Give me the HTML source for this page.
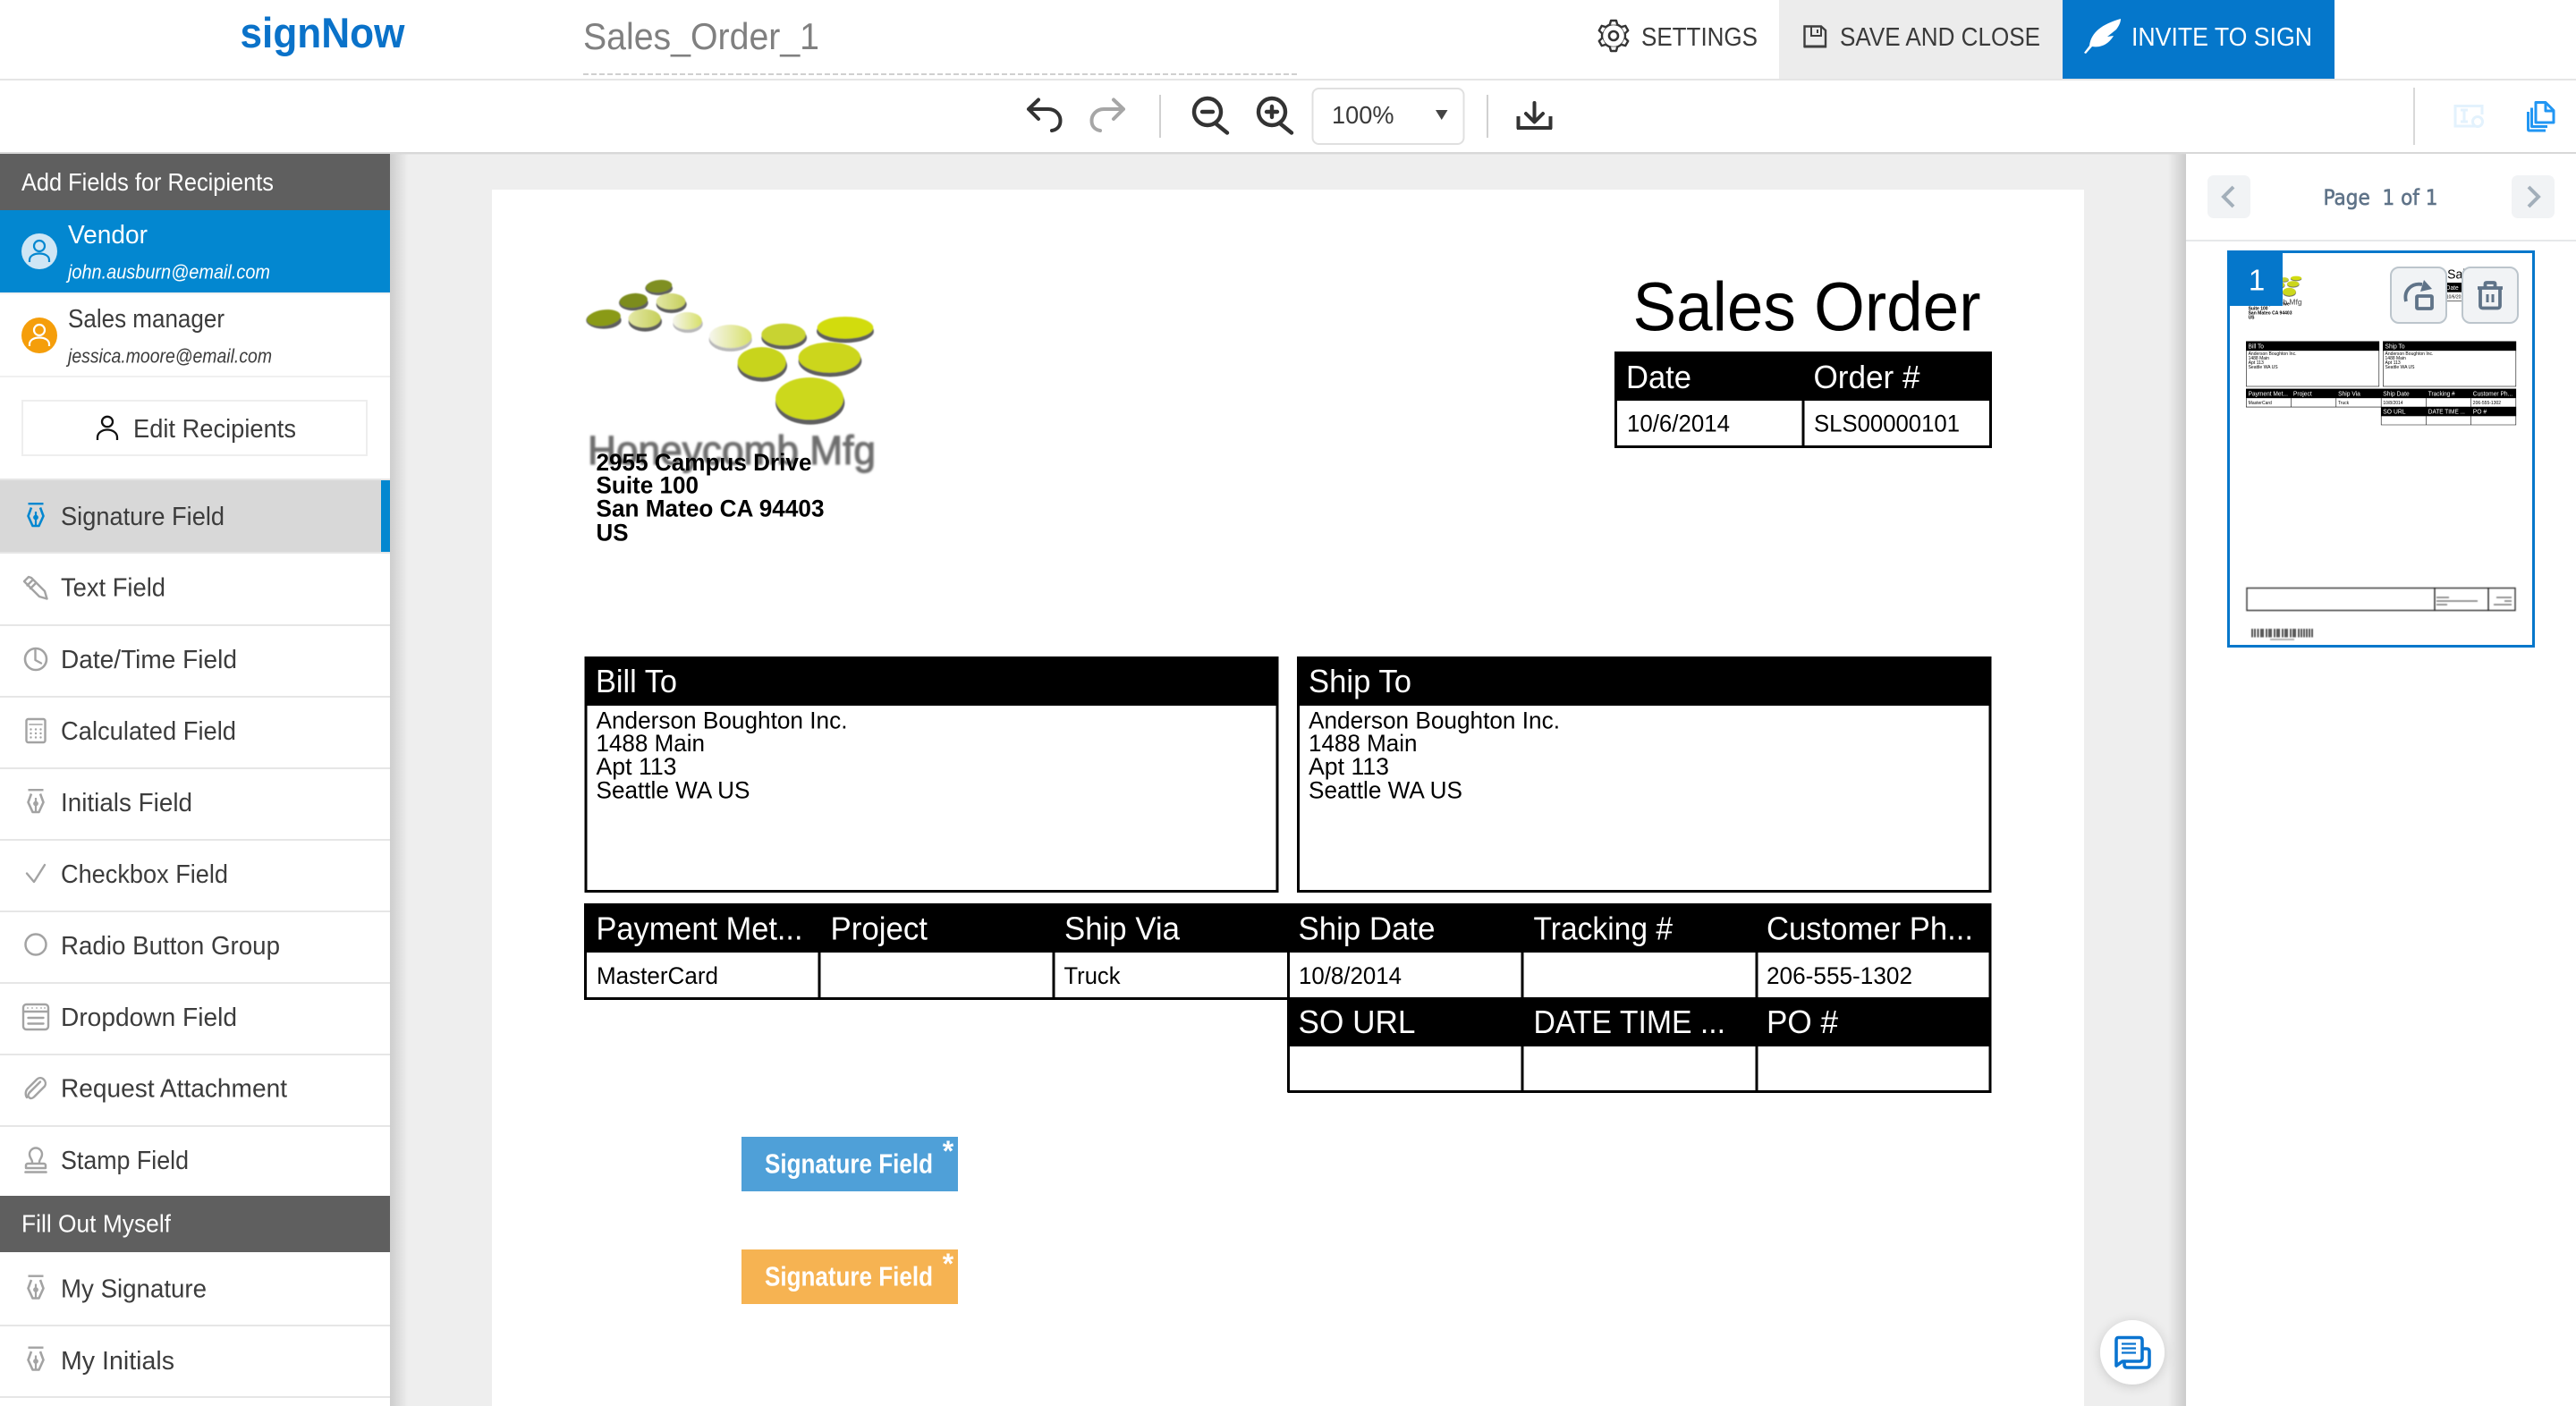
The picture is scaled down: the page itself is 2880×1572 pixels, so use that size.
<!DOCTYPE html>
<html lang="en">
<head>
<meta charset="utf-8">
<title>Sales_Order_1</title>
<style>
html,body{margin:0;padding:0;background:#fff;width:2880px;height:1572px;overflow:hidden}
svg{display:block}
text{font-family:"Liberation Sans",Arial,sans-serif;white-space:pre}
.s text{fill:#3c3c3c;font-size:29px}
.d text{fill:#000;font-size:26.500px}
.d .h{fill:#fff;font-size:36px}
.ic{fill:none;stroke:#a3a3a3;stroke-width:2.4;stroke-linecap:round;stroke-linejoin:round}
.tb{fill:none;stroke:#333;stroke-width:4;stroke-linecap:round;stroke-linejoin:round}
</style>
</head>
<body>
<svg xmlns="http://www.w3.org/2000/svg" width="2880" height="1572" viewBox="0 0 2880 1572">
<defs>
<linearGradient id="shL" x1="0" x2="1" y1="0" y2="0"><stop offset="0" stop-color="#cdcdcd"/><stop offset="1" stop-color="#eeeeee"/></linearGradient>
<linearGradient id="shR" x1="0" x2="1" y1="0" y2="0"><stop offset="0" stop-color="#eeeeee"/><stop offset="1" stop-color="#cbcbcb"/></linearGradient>
<linearGradient id="fade1" x1="0" x2="1" y1="0" y2="0"><stop offset="0" stop-color="#f6f6ee"/><stop offset="1" stop-color="#d8e06a"/></linearGradient>
<linearGradient id="fade2" x1="0" x2="1" y1="0" y2="0"><stop offset="0" stop-color="#e4e8a8"/><stop offset="1" stop-color="#c6cf5a"/></linearGradient>
<filter id="lb"><feGaussianBlur stdDeviation="1.6"/></filter>
<filter id="hb"><feGaussianBlur stdDeviation="1.1"/></filter>
<filter id="tb"><feGaussianBlur stdDeviation="0.55"/></filter>
<filter id="cs" x="-30%" y="-30%" width="160%" height="160%"><feDropShadow dx="0" dy="2" stdDeviation="6" flood-color="#000" flood-opacity=".16"/></filter>
<g id="nib">
<rect x="-8.500" y="0" width="17" height="2.400" fill="currentColor"/>
<path d="M-5 5.500L-8.500 15L-3.500 26H3.500L8.500 15L5 5.500" fill="none" stroke="currentColor" stroke-width="2.600" stroke-linejoin="round"/>
<path d="M0 10V26" stroke="currentColor" stroke-width="2.200"/>
<circle cx="0" cy="16.500" r="2.900" fill="currentColor"/>
</g>
<path id="tooth" d="M-4.200 -12.400L-3 -17H3L4.200 -12.400" fill="#fff" stroke="#333" stroke-width="2.400" stroke-linejoin="round"/>
</defs>

<!-- page background -->
<rect width="2880" height="1572" fill="#fff"/>
<rect x="436" y="172" width="2008" height="1400" fill="#eeeeee"/>
<rect x="436" y="172" width="20" height="1400" fill="url(#shL)"/>
<rect x="2424" y="172" width="20" height="1400" fill="url(#shR)"/>

<!-- header -->
<text x="268.500" y="53" font-size="47" font-weight="700" fill="#0a72c9" textLength="184" lengthAdjust="spacingAndGlyphs">signNow</text>
<text x="652" y="55" font-size="42" fill="#808080" textLength="264" lengthAdjust="spacingAndGlyphs">Sales_Order_1</text>
<path d="M652 83H1452" stroke="#cfcfcf" stroke-width="2" stroke-dasharray="6 3"/>
<rect x="1989" y="0" width="317" height="88" fill="#ececec"/>
<rect x="2306" y="0" width="304" height="88" fill="#0577cb"/>
<rect y="88" width="2880" height="2" fill="#e5e5e5"/>

<g transform="translate(1804,40)">
<circle r="13" fill="#fff" stroke="#333" stroke-width="2.400"/>
<use href="#tooth"/><use href="#tooth" transform="rotate(60)"/><use href="#tooth" transform="rotate(120)"/><use href="#tooth" transform="rotate(180)"/><use href="#tooth" transform="rotate(240)"/><use href="#tooth" transform="rotate(300)"/>
<circle r="5" fill="none" stroke="#333" stroke-width="2.600"/>
</g>
<text x="1835" y="51" font-size="29" fill="#3a3a3a" textLength="130" lengthAdjust="spacingAndGlyphs">SETTINGS</text>

<path d="M2017.500 29.500H2036L2041 34V52H2017.500Z" fill="none" stroke="#3f3f3f" stroke-width="2.400"/>
<path d="M2017 52H2042" stroke="#3f3f3f" stroke-width="3"/>
<path d="M2025 30V40H2036V30M2032 33V37" fill="none" stroke="#3f3f3f" stroke-width="2"/>
<text x="2057" y="51" font-size="29" fill="#3a3a3a" textLength="224" lengthAdjust="spacingAndGlyphs">SAVE AND CLOSE</text>

<path d="M2371 21C2350 27 2338 36 2336 51L2330 59L2332 60L2339 52C2351 54 2359 47 2363 40L2356 41L2366 33C2369 29 2371 25 2371 21Z" fill="#fff"/>
<text x="2383" y="51" font-size="29" fill="#fff" textLength="202" lengthAdjust="spacingAndGlyphs">INVITE TO SIGN</text>

<!-- toolbar -->
<rect y="170" width="2880" height="2.400" fill="#d8d8d8"/>
<path class="tb" d="M1161 111.500L1150 122L1161 133M1150 122H1172C1180 122 1185.500 128 1185.500 135C1185.500 141 1182 145 1176 146"/>
<path class="tb" style="stroke:#a6a6a6" d="M1245 111.500L1256 122L1245 133M1256 122H1234C1226 122 1220.500 128 1220.500 135C1220.500 141 1224 145 1230 146"/>
<rect x="1296" y="106" width="2" height="48" fill="#d0d0d0"/>
<g class="tb" style="stroke-width:4.400">
<circle cx="1350" cy="125" r="15"/>
<path d="M1359 138L1372 148.500M1344 125H1356"/>
<circle cx="1422" cy="125" r="15"/>
<path d="M1431 138L1444 148.500M1416 125H1428M1422 119V131"/>
</g>
<rect x="1467.500" y="99" width="169" height="62" rx="7" fill="#fff" stroke="#e0e0e0" stroke-width="2"/>
<text x="1489" y="138" font-size="28" fill="#3a3a3a" textLength="69.500" lengthAdjust="spacingAndGlyphs">100%</text>
<path d="M1605 123H1618.500L1611.750 134Z" fill="#444"/>
<rect x="1662" y="106" width="2" height="48" fill="#d0d0d0"/>
<path class="tb" d="M1715.500 115V136M1706 127L1715.500 136.500L1725 127"/>
<path class="tb" style="stroke-linecap:butt" d="M1697.500 130V143H1733.500V130"/>
<rect x="1696" y="141" width="39" height="4" fill="#333"/>
<rect x="2698" y="98" width="2" height="64" fill="#d8d8d8"/>
<g fill="none" stroke="#e3f2fd" stroke-width="3">
<path d="M2768 141H2745V118.500H2775V128"/>
<path d="M2755 123V136M2751 123H2759M2751 136H2759"/>
<circle cx="2770" cy="136" r="5.500"/>
</g>
<g fill="none" stroke="#2196f3" stroke-width="3" stroke-linejoin="round">
<path d="M2835 114.500H2846L2855 123.500V137H2835Z"/>
<path d="M2846 115V124H2855"/>
<path d="M2830.500 120.500V141.500H2848"/>
<path d="M2826.500 125V144.500C2826.500 145.500 2827 146 2828 146H2846"/>
</g>

<!-- left sidebar -->
<rect x="0" y="172" width="436" height="1400" fill="#fff"/>
<rect x="0" y="172" width="436" height="63" fill="#5f5f5f"/>
<text x="24" y="213" font-size="27.500" fill="#fff" textLength="282" lengthAdjust="spacingAndGlyphs">Add Fields for Recipients</text>
<rect x="0" y="235" width="436" height="92" fill="#0387d0"/>
<rect x="0" y="327" width="436" height="2" fill="#f2f2f2"/>
<circle cx="44" cy="281" r="20" fill="#cfe6f5"/>
<g fill="none" stroke="#0387d0" stroke-width="2.200">
<ellipse cx="44" cy="275" rx="6" ry="6"/>
<path d="M33 293V291C33 286 38 283.500 44 283.500C50 283.500 55 286 55 291V293"/>
</g>
<text x="76" y="272" font-size="29" fill="#fff" textLength="89" lengthAdjust="spacingAndGlyphs">Vendor</text>
<text x="76" y="311.500" font-size="22" font-style="italic" fill="#fff" textLength="226" lengthAdjust="spacingAndGlyphs">john.ausburn@email.com</text>
<rect x="0" y="420" width="436" height="2" fill="#f0f0f0"/>
<circle cx="44" cy="375" r="20" fill="#f59e0b"/>
<g fill="none" stroke="#fff" stroke-width="2.200">
<ellipse cx="44" cy="369" rx="6" ry="6"/>
<path d="M33 387V385C33 380 38 377.500 44 377.500C50 377.500 55 380 55 385V387"/>
</g>
<g class="s">
<text x="76" y="366" textLength="175" lengthAdjust="spacingAndGlyphs">Sales manager</text>
<text x="76" y="405.500" style="font-size:22px;font-style:italic" textLength="228" lengthAdjust="spacingAndGlyphs">jessica.moore@email.com</text>
</g>
<rect x="25" y="448" width="385" height="61" fill="#fff" stroke="#eeeeee" stroke-width="2"/>
<g fill="none" stroke="#111" stroke-width="2.300">
<ellipse cx="120" cy="471.500" rx="6" ry="5.700"/>
<path d="M109 492V489C109 484 114 480.500 120 480.500C126 480.500 131 484 131 489V492"/>
</g>
<g class="s"><text x="149" y="489" textLength="182" lengthAdjust="spacingAndGlyphs">Edit Recipients</text></g>

<rect x="0" y="535" width="436" height="2" fill="#e6e6e6"/>
<rect x="0" y="537" width="436" height="80" fill="#d8d8d8"/>
<rect x="426" y="537" width="10" height="80" fill="#0387d0"/>
<g fill="#e6e6e6">
<rect y="617" width="436" height="2"/><rect y="698" width="436" height="2"/><rect y="778" width="436" height="2"/><rect y="858" width="436" height="2"/><rect y="938" width="436" height="2"/><rect y="1018" width="436" height="2"/><rect y="1098" width="436" height="2"/><rect y="1178" width="436" height="2"/><rect y="1258" width="436" height="2"/><rect y="1481" width="436" height="2"/><rect y="1561" width="436" height="2"/>
</g>
<rect x="0" y="1337" width="436" height="63" fill="#5f5f5f"/>
<text x="24" y="1377.500" font-size="27.500" fill="#fff" textLength="167" lengthAdjust="spacingAndGlyphs">Fill Out Myself</text>

<g class="s">
<text x="68" y="587" textLength="183" lengthAdjust="spacingAndGlyphs">Signature Field</text>
<text x="68" y="666.500" textLength="117" lengthAdjust="spacingAndGlyphs">Text Field</text>
<text x="68" y="747" textLength="197" lengthAdjust="spacingAndGlyphs">Date/Time Field</text>
<text x="68" y="827" textLength="196" lengthAdjust="spacingAndGlyphs">Calculated Field</text>
<text x="68" y="907" textLength="147" lengthAdjust="spacingAndGlyphs">Initials Field</text>
<text x="68" y="987" textLength="187" lengthAdjust="spacingAndGlyphs">Checkbox Field</text>
<text x="68" y="1067" textLength="245" lengthAdjust="spacingAndGlyphs">Radio Button Group</text>
<text x="68" y="1147" textLength="197" lengthAdjust="spacingAndGlyphs">Dropdown Field</text>
<text x="68" y="1226.600" textLength="253" lengthAdjust="spacingAndGlyphs">Request Attachment</text>
<text x="68" y="1307" textLength="143" lengthAdjust="spacingAndGlyphs">Stamp Field</text>
<text x="68" y="1450.600" textLength="163" lengthAdjust="spacingAndGlyphs">My Signature</text>
<text x="68" y="1531" textLength="127" lengthAdjust="spacingAndGlyphs">My Initials</text>
</g>

<!-- sidebar icons -->
<use href="#nib" x="40" y="562" color="#0387d0"/>
<use href="#nib" x="40" y="882" color="#a3a3a3"/>
<use href="#nib" x="40" y="1425.500" color="#a3a3a3"/>
<use href="#nib" x="40" y="1505.500" color="#a3a3a3"/>
<g class="ic">
<path d="M27 650L32 645L35 646L50 661L52.500 669.500L44 667L29 652Z M30.500 654.500L36 649 M34 658L39.500 652.500"/>
<circle cx="40" cy="737" r="12" stroke-width="2.600"/>
<path d="M39.500 727V738L46 741.500" stroke-width="2.400"/>
<rect x="29.500" y="804" width="21" height="26" rx="2"/>
<path d="M33 810H47" stroke-width="1.600"/>
<path d="M30 976.500L38 986L50 967"/>
<circle cx="40" cy="1056" r="11.500" stroke-width="2.500"/>
<rect x="26" y="1123" width="28" height="28" rx="3.500" stroke-width="2.400"/>
<path d="M27 1131H53M31.500 1138H48.500M31.500 1144.500H48.500" stroke-width="2.400"/>
<path d="M45 1209.500L33 1221.500C31 1224 31 1225.500 32.500 1227C34 1228.500 35.500 1228.500 38 1226.500L50 1214.500C51.500 1212 51 1209 49 1207C47 1205 44 1204.500 41.500 1206.500L30.500 1217.500C28.500 1220 28 1224 30 1227"/>
<path d="M36 1301V1299C36 1296 33 1295 33 1290.500A7 7 0 0 1 47 1290.500C47 1295 44 1296 44 1299V1301M29 1306V1303A2 2 0 0 1 31 1301H49A2 2 0 0 1 51 1303V1306Z"/>
<path d="M28.500 1310.500H51.500" stroke-width="2.600"/>
</g>
<g fill="#a3a3a3">
<circle cx="34.500" cy="815.500" r="1.200"/><circle cx="40" cy="815.500" r="1.200"/><circle cx="45.500" cy="815.500" r="1.200"/>
<circle cx="34.500" cy="820" r="1.200"/><circle cx="40" cy="820" r="1.200"/><circle cx="45.500" cy="820" r="1.200"/>
<circle cx="34.500" cy="824.500" r="1.200"/><circle cx="40" cy="824.500" r="1.200"/><circle cx="45.500" cy="824.500" r="1.200"/>
<circle cx="31" cy="1127" r=".9"/><circle cx="36" cy="1127" r=".9"/><circle cx="41" cy="1127" r=".9"/><circle cx="46" cy="1127" r=".9"/><circle cx="50" cy="1127" r=".9"/>
</g>

<!-- document page -->
<rect x="550" y="212" width="1780" height="1360" fill="#fff"/>
<g id="doc" class="d">
<g transform="translate(640,280) scale(.33333)" filter="url(#lb)">
<g fill="#444" opacity=".85">
<ellipse cx="290" cy="127" rx="46" ry="23"/><ellipse cx="205" cy="176" rx="49" ry="26"/><ellipse cx="332" cy="181" rx="51" ry="29"/><ellipse cx="105" cy="234" rx="59" ry="29"/><ellipse cx="244" cy="239" rx="56" ry="33"/><ellipse cx="387" cy="246" rx="50" ry="30" opacity=".45"/><ellipse cx="530" cy="299" rx="72" ry="40" opacity=".45"/><ellipse cx="710" cy="293" rx="76" ry="39"/><ellipse cx="915" cy="271" rx="96" ry="39"/><ellipse cx="637" cy="387" rx="83" ry="53"/><ellipse cx="864" cy="371" rx="106" ry="53"/><ellipse cx="797" cy="511" rx="116" ry="73"/>
</g>
<ellipse cx="290" cy="120" rx="44" ry="21" fill="#7f8f22" transform="rotate(-6 290 120)"/>
<ellipse cx="205" cy="168" rx="47" ry="24" fill="#7c8c1c" transform="rotate(-6 205 168)"/>
<ellipse cx="330" cy="171" rx="49" ry="27" fill="url(#fade2)"/>
<ellipse cx="105" cy="226" rx="57" ry="27" fill="#8a9a18" transform="rotate(-8 105 226)"/>
<ellipse cx="242" cy="228" rx="54" ry="31" fill="url(#fade2)"/>
<ellipse cx="385" cy="236" rx="49" ry="29" fill="url(#fade1)"/>
<ellipse cx="530" cy="288" rx="71" ry="39" fill="url(#fade1)"/>
<ellipse cx="708" cy="282" rx="74" ry="37" fill="#c8d330"/>
<ellipse cx="915" cy="259" rx="94" ry="37" fill="#d2dc10"/>
<ellipse cx="635" cy="375" rx="81" ry="51" fill="#c8d41c"/>
<ellipse cx="862" cy="359" rx="104" ry="51" fill="#ccd61e"/>
<ellipse cx="795" cy="497" rx="114" ry="71" fill="#ccd81a"/>
</g>
<text x="657" y="519" style="font-size:45px;fill:#6e6e6e" stroke="#6e6e6e" stroke-width="1.200" filter="url(#hb)" textLength="322" lengthAdjust="spacingAndGlyphs">Honeycomb Mfg</text>
<g font-weight="700">
<text x="666.500" y="526" textLength="241" lengthAdjust="spacingAndGlyphs">2955 Campus Drive</text>
<text x="666.500" y="551.700" textLength="114.500" lengthAdjust="spacingAndGlyphs">Suite 100</text>
<text x="666.500" y="577.700" textLength="255" lengthAdjust="spacingAndGlyphs">San Mateo CA 94403</text>
<text x="666.500" y="604.300" textLength="36" lengthAdjust="spacingAndGlyphs">US</text>
</g>
<text x="1825.500" y="369.300" style="font-size:77px" textLength="389" lengthAdjust="spacingAndGlyphs">Sales Order</text>

<rect x="1805" y="393" width="422" height="55" fill="#000"/>
<rect x="1806.500" y="394.500" width="419" height="105" fill="none" stroke="#000" stroke-width="3"/>
<path d="M2016 448V500" stroke="#000" stroke-width="3"/>
<text class="h" x="1818" y="434" textLength="73" lengthAdjust="spacingAndGlyphs">Date</text>
<text class="h" x="2027.500" y="434" textLength="119" lengthAdjust="spacingAndGlyphs">Order #</text>
<text x="1819" y="482.700" textLength="115" lengthAdjust="spacingAndGlyphs">10/6/2014</text>
<text x="2028" y="482.700" textLength="163" lengthAdjust="spacingAndGlyphs">SLS00000101</text>

<rect x="653.500" y="734" width="776" height="55" fill="#000"/>
<rect x="655" y="735.500" width="773" height="261" fill="none" stroke="#000" stroke-width="3"/>
<text class="h" x="666" y="774" textLength="91" lengthAdjust="spacingAndGlyphs">Bill To</text>
<text x="666.500" y="814.300" textLength="281" lengthAdjust="spacingAndGlyphs">Anderson Boughton Inc.</text>
<text x="666.500" y="840" textLength="121.500" lengthAdjust="spacingAndGlyphs">1488 Main</text>
<text x="666.500" y="866" textLength="90" lengthAdjust="spacingAndGlyphs">Apt 113</text>
<text x="666.500" y="892.700" textLength="172" lengthAdjust="spacingAndGlyphs">Seattle WA US</text>

<rect x="1450" y="734" width="776.500" height="55" fill="#000"/>
<rect x="1451.500" y="735.500" width="773.500" height="261" fill="none" stroke="#000" stroke-width="3"/>
<text class="h" x="1463" y="774" textLength="115" lengthAdjust="spacingAndGlyphs">Ship To</text>
<text x="1463" y="814.300" textLength="281" lengthAdjust="spacingAndGlyphs">Anderson Boughton Inc.</text>
<text x="1463" y="840" textLength="121.500" lengthAdjust="spacingAndGlyphs">1488 Main</text>
<text x="1463" y="866" textLength="90" lengthAdjust="spacingAndGlyphs">Apt 113</text>
<text x="1463" y="892.700" textLength="172" lengthAdjust="spacingAndGlyphs">Seattle WA US</text>

<rect x="653" y="1010" width="1573.500" height="55" fill="#000"/>
<rect x="1440" y="1115" width="786.500" height="55" fill="#000"/>
<g fill="none" stroke="#000" stroke-width="3">
<path d="M654.500 1065V1116.500H1441M916 1065V1116M1178 1065V1116M1440.500 1065V1221.500M1702 1065V1116M1702 1170V1221.500M1964 1065V1116M1964 1170V1221.500M2225 1065V1221.500M1440 1220.500H2226.500"/>
</g>
<text class="h" x="666.500" y="1050.700" textLength="231" lengthAdjust="spacingAndGlyphs">Payment Met...</text>
<text class="h" x="928.500" y="1050.700" textLength="108.500" lengthAdjust="spacingAndGlyphs">Project</text>
<text class="h" x="1190" y="1050.700" textLength="129" lengthAdjust="spacingAndGlyphs">Ship Via</text>
<text class="h" x="1451.500" y="1050.700" textLength="153" lengthAdjust="spacingAndGlyphs">Ship Date</text>
<text class="h" x="1714.500" y="1050.700" textLength="155.500" lengthAdjust="spacingAndGlyphs">Tracking #</text>
<text class="h" x="1975" y="1050.700" textLength="231" lengthAdjust="spacingAndGlyphs">Customer Ph...</text>
<text x="667" y="1100" textLength="136" lengthAdjust="spacingAndGlyphs">MasterCard</text>
<text x="1189.500" y="1100" textLength="63" lengthAdjust="spacingAndGlyphs">Truck</text>
<text x="1452" y="1100" textLength="115" lengthAdjust="spacingAndGlyphs">10/8/2014</text>
<text x="1975" y="1100" textLength="163" lengthAdjust="spacingAndGlyphs">206-555-1302</text>
<text class="h" x="1451.500" y="1155" textLength="131" lengthAdjust="spacingAndGlyphs">SO URL</text>
<text class="h" x="1714.500" y="1155" textLength="214.500" lengthAdjust="spacingAndGlyphs">DATE TIME ...</text>
<text class="h" x="1975" y="1155" textLength="80" lengthAdjust="spacingAndGlyphs">PO #</text>
</g>

<!-- signature fields -->
<rect x="829" y="1271" width="242" height="61" fill="#4fa0d8"/>
<text x="855" y="1311.700" font-size="31" font-weight="700" fill="#fff" textLength="188" lengthAdjust="spacingAndGlyphs">Signature Field</text>
<text x="1060" y="1298" font-size="32" font-weight="700" fill="#fff" text-anchor="middle">*</text>
<rect x="829" y="1397" width="242" height="61" fill="#f6b352"/>
<text x="855" y="1437.700" font-size="31" font-weight="700" fill="#fff" textLength="188" lengthAdjust="spacingAndGlyphs">Signature Field</text>
<text x="1060" y="1424" font-size="32" font-weight="700" fill="#fff" text-anchor="middle">*</text>

<!-- chat button -->
<circle cx="2384" cy="1512" r="36" fill="#fff" filter="url(#cs)"/>
<g fill="none" stroke="#0a74d0" stroke-width="3.600" stroke-linejoin="round" stroke-linecap="round">
<path d="M2397 1508H2400C2402 1508 2403 1509 2403 1511V1526C2403 1528 2402 1529 2400 1529H2378C2376 1529 2375 1528 2375 1526V1522"/>
<path d="M2368 1495.500H2392C2394 1495.500 2395 1496.500 2395 1498.500V1519C2395 1521 2394 1522 2392 1522H2373L2366 1527V1498.500C2366 1496.500 2367 1495.500 2368 1495.500Z"/>
</g>
<path d="M2372 1502.500H2388M2372 1507.500H2388M2372 1512.500H2388" stroke="#0a74d0" stroke-width="2.200"/>

<!-- right panel -->
<rect x="2444" y="172" width="436" height="1400" fill="#fff"/>
<rect x="2468" y="196" width="48" height="48" rx="7" fill="#f1f3f5"/>
<rect x="2808" y="196" width="48" height="48" rx="7" fill="#f1f3f5"/>
<path d="M2497 209L2486 220L2497 231" fill="none" stroke="#a3afba" stroke-width="4"/>
<path d="M2827 209L2838 220L2827 231" fill="none" stroke="#a3afba" stroke-width="4"/>
<text x="2597.500" y="229" font-size="24" fill="#5f7388" style="font-family:'DejaVu Sans',sans-serif" stroke="#5f7388" stroke-width=".6" textLength="128" lengthAdjust="spacingAndGlyphs">Page  1 of 1</text>
<rect x="2444" y="268" width="436" height="2" fill="#e6e8ea"/>

<!-- thumbnail -->
<rect x="2491.500" y="281.500" width="341" height="441" fill="#fff" stroke="#0577cb" stroke-width="3"/>
<use href="#doc" transform="translate(2385.620,240.670) scale(.192)" filter="url(#tb)"/>
<g filter="url(#tb)">
<rect x="2512" y="657.500" width="300" height="25" fill="none" stroke="#333" stroke-width="1.400"/>
<path d="M2722 657V683M2782 657V683" stroke="#222" stroke-width="1.400"/>
<path d="M2724 668H2738M2724 672H2770M2724 676H2736M2791 668H2808M2800 672H2808M2788 676H2808" stroke="#777" stroke-width="1.500"/>
<path d="M2518 703V712.500M2521 703V712.500M2524.500 703V712.500M2528 703V712.500M2530 703V712.500M2534 703V712.500M2537 703V712.500M2539 703V712.500M2543 703V712.500M2546 703V712.500M2548 703V712.500M2552 703V712.500M2555 703V712.500M2557 703V712.500M2561 703V712.500M2564 703V712.500M2566 703V712.500M2570 703V712.500M2573 703V712.500M2576 703V712.500M2579 703V712.500M2582 703V712.500M2585 703V712.500" stroke="#222" stroke-width="1.500"/>
<path d="M2538 715H2565" stroke="#999" stroke-width="1.500"/>
</g>
<rect x="2490" y="280" width="62" height="62" fill="#0577cb"/>
<text x="2523" y="324.500" font-size="33" fill="#fff" text-anchor="middle">1</text>
<rect x="2673" y="299" width="62" height="62" rx="9" fill="#f1f3f5" stroke="#bcc5cc" stroke-width="2"/>
<rect x="2753" y="299" width="62" height="62" rx="9" fill="#f1f3f5" stroke="#bcc5cc" stroke-width="2"/>
<g fill="none" stroke="#5f7388" stroke-width="3.800">
<rect x="2702" y="331" width="17" height="14" rx="1"/>
<path d="M2690 337C2687 325 2696 316 2708 318"/>
<path d="M2770 322H2798"/>
<path d="M2778.500 322V317.500C2778.500 316.500 2779 316 2780 316H2788C2789 316 2789.500 316.500 2789.500 317.500V322"/>
<path d="M2773 322V342C2773 343.500 2774 344.500 2775.500 344.500H2792.500C2794 344.500 2795 343.500 2795 342V322"/>
<path d="M2781 329V338M2787 329V338" stroke-width="3"/>
</g>
<path d="M2719 323L2706 326L2710 313Z" fill="#5f7388"/>
</svg>
</body>
</html>
